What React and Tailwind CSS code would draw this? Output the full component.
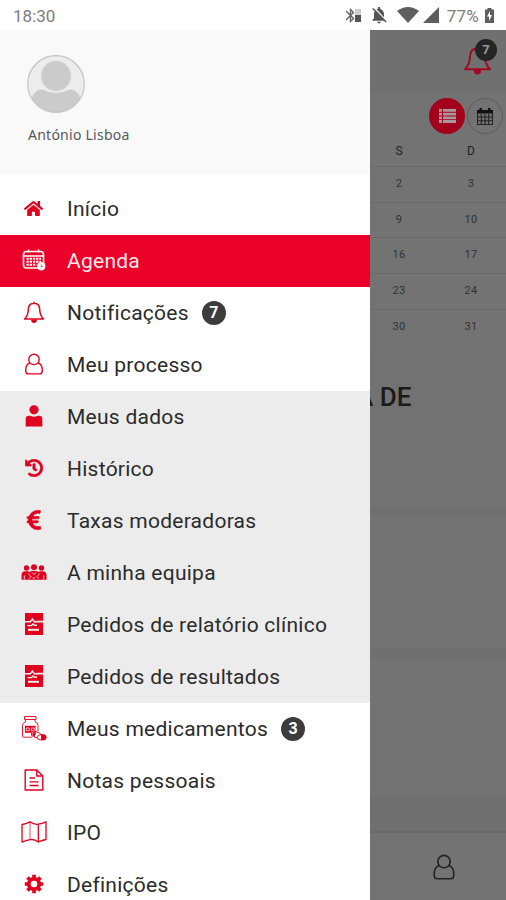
import { FaHome, FaHistory, FaEuroSign } from "react-icons/fa";
import { MdBluetooth, MdNotificationsOff } from "react-icons/md";


const CalendarClockIcon = () => (
    <svg className="h-[22px] w-6" viewBox="0 0 24 22" fill="none" stroke="currentColor">
        <rect x="1.5" y="2.5" width="20" height="16.5" rx="3" strokeWidth="1.6" />
        <path d="M1.5 7h20" strokeWidth="1.5" />
        <path d="M6.5 .5v3M16.5 .5v3" strokeWidth="1.5" />
        <path d="M4.5 9.8h14.5M4.5 12.8h14.5M4.5 15.8h10" strokeWidth="2" strokeDasharray="2.3 .9" />
        <circle cx="19.3" cy="17.3" r="4.2" fill="currentColor" stroke="none" />
        <path d="M19.3 15.3v2.2h1.6" stroke="#eb0029" strokeWidth=".7" />
    </svg>
)

const BellIcon = ({ className }) => (
    <svg className={className} viewBox="0 0 22 22" fill="none" stroke="currentColor" strokeWidth="1.5" strokeLinejoin="round">
        <path d="M11 2.2c-3.8 0-5.4 2.5-5.6 5.6C5.2 12.5 4 15.8 1.5 18h19c-2.5-2.2-3.7-5.5-3.9-10.2C16.4 4.7 14.8 2.2 11 2.2z" />
        <path d="M11 .7v1.5" />
        <path d="M8.3 18.5a2.7 2.7 0 0 0 5.4 0z" fill="currentColor" stroke="none" />
        <path d="M9 19.2a2 2 0 0 0 4 0" />
    </svg>
)

const UserOutlineIcon = ({ className }) => (
    <svg className={className} viewBox="0 0 20 24" fill="none" stroke="currentColor" strokeWidth="1.5">
        <circle cx="10" cy="7" r="5.7" />
        <path d="M5.5 10.7C2.5 11.8 1 14.3 1 18v1.5Q1 22.8 4 22.8h12q3 0 3-3.3V18c0-3.7-1.5-6.2-4.5-7.3" />
    </svg>
)

const UserIcon = () => (
    <svg className="h-[22px] w-[18px]" viewBox="0 0 18 22" fill="currentColor">
        <circle cx="9" cy="4.8" r="4.6" />
        <path d="M.7 21.5V14q0-3.3 3.3-3.3h1.2q3.8 2 7.6 0H14q3.3 0 3.3 3.3v7.5z" />
    </svg>
)

const TeamIcon = () => (
    <svg className="h-4 w-[26px]" viewBox="0 0 26 16" fill="currentColor">
        <circle cx="5.5" cy="4" r="2.7" />
        <circle cx="20.5" cy="4" r="2.7" />
        <circle cx="13" cy="3.2" r="3" />
        <path d="M.5 15.8V11q0-3.8 3.8-3.8h2.4q1.2 0 2 .7Q10 7 11 7h4q1.3 0 2.3.9.8-.7 2-.7h2.4q3.8 0 3.8 3.8v4.8z" />
        <path d="M3.3 11.5v4M22.7 11.5v4" stroke="#ececec" strokeWidth=".9" />
        <path d="M7.5 9.5l2 3M18.5 9.5l-2 3M11 8.5l2 2 2-2M8 14.5l2.5-2M18 14.5l-2.5-2M11.5 14h3" stroke="#ececec" strokeWidth=".8" fill="none" />
    </svg>
)

const ReportIcon = () => (
    <svg className="h-[22px] w-[18px]" viewBox="0 0 18 22">
        <path d="M0 0h18v22H0z" fill="currentColor" />
        <path d="M0 8.7h5.5L7.3 6l2.5 3.2L12 8.6h6" fill="none" stroke="#ececec" strokeWidth="1.6" />
        <path d="M2.5 12.6h4l1.5-1.6 1.5 1.2H12" fill="none" stroke="#ececec" strokeWidth="1.4" />
        <path d="M3 16.8h11" stroke="#ececec" strokeWidth="2" />
    </svg>
)

const MedicineIcon = () => (
    <svg className="h-[26px] w-[26px]" viewBox="0 0 26 26" fill="none" stroke="currentColor">
        <path d="M3.5 1.5h11.5v3H3.5z" strokeWidth=".9" />
        <path d="M4.5 4.5v2.2Q1.5 8 1.5 10.5v10.7q0 1 1 1H11M14 4.5v2.2q3 1.3 3 3.8V16" strokeWidth=".9" />
        <path d="M4 10.8h10.5v7H4z" fill="currentColor" stroke="none" />
        <path d="M5.3 13h3v2.7h-3zM10.3 13h3v2.7h-3z" stroke="#fff" strokeWidth=".7" />
        <rect x="10.5" y="16.8" width="9.5" height="5.5" rx="2.7" fill="#fff" strokeWidth=".9" transform="rotate(18 15 19)" />
        <path d="M11.5 18q1.5-1.5 3.5-.5l-1.3 4.3q-3-1-2.2-3.8z" fill="currentColor" stroke="none" />
        <rect x="16.5" y="19.8" width="8.5" height="5" rx="2.5" fill="#fff" strokeWidth=".9" />
        <path d="M20.5 19.8h2a2.5 2.5 0 0 1 0 5h-2z" fill="currentColor" />
    </svg>
)

const NoteIcon = () => (
    <svg className="h-[22px] w-5" viewBox="0 0 20 22" fill="none" stroke="currentColor" strokeWidth="1.4">
        <path d="M1.2 1h11.6l6 6v14H1.2z" />
        <path d="M12.8 1v6h6" />
        <path d="M5.5 9h5.5M5.5 12.8h9M5.5 16.5h9" strokeWidth="1.3" />
    </svg>
)

const MapIcon = () => (
    <svg className="h-[22px] w-[26px]" viewBox="0 0 26 22" fill="none" stroke="currentColor" strokeWidth="1.3" strokeLinejoin="round">
        <path d="M1 3.5Q5 2.8 9 .8q4 3.2 8.3 2.4Q21 2.5 25 .8v17.7q-4 .7-7.7 2.5-4.3-3.2-8.3-2.3-4 .8-8 2.5z" />
        <path d="M9 .8v17.9" strokeWidth=".7" />
        <path d="M17.3 3.2V21" />
    </svg>
)

const GearIcon = () => (
    <svg className="h-5 w-5" viewBox="0 0 20 20" fill="none" stroke="currentColor">
        <circle cx="10" cy="10" r="5.2" strokeWidth="3.8" />
        <path d="M10 .8v3M10 16.2v3M.8 10h3M16.2 10h3M3.5 3.5l2.2 2.2M14.3 14.3l2.2 2.2M3.5 16.5l2.2-2.2M14.3 5.7l2.2-2.2" strokeWidth="3.6" />
    </svg>
)

const CountBadge = ({ count }) => (
    <span className="mb-0.5 ml-[13px] flex h-6 w-6 items-center justify-center rounded-full bg-[#3c3c3c] text-[16px] font-bold tracking-normal text-white">
        {count}
    </span>
)

const MenuItem = ({ icon, label, count, active }) => (
    <li className={`flex h-[52px] shrink-0 items-center whitespace-nowrap pt-px text-[21px] tracking-[0.26px] ${active ? 'bg-[#eb0029] text-[#ffe9ec]' : 'text-[#2b2b2b]'}`}>
        <span className={`flex w-[67px] justify-center pb-[3px] ${active ? 'text-white' : 'text-[#e2001f]'}`}>{icon}</span>
        {label}
        {count && <CountBadge count={count} />}
    </li>
)

const StatusBar = () => (
    <div className="flex h-[30px] shrink-0 items-center justify-between bg-white pr-3 pl-[13px] text-[#7c7c7c]">
        <span className="pt-[3px] text-[17px]">18:30</span>

        <div className="flex items-center">
            <MdBluetooth className="h-[17px] w-[17px] text-[#666]" />
            <svg className="-ml-1 h-[13px] w-[6px]" viewBox="0 0 6 13">
                <path d="M0 0h6v6H0z" fill="#ccc" />
                <path d="M0 6h6v7H0z" fill="#555" />
            </svg>
            <MdNotificationsOff className="ml-2 h-5 w-5 text-[#555]" />
            <svg className="ml-2 h-4 w-[22px]" viewBox="0 0 22 16">
                <path d="M0 4Q11-4 22 4L11 16z" fill="#5e5e5e" />
            </svg>
            <svg className="ml-1 h-4 w-4" viewBox="0 0 16 16">
                <path d="M16 0v16H0z" fill="#5e5e5e" />
            </svg>
            <span className="ml-2 pt-[3px] text-[17px] tracking-[0.2px]">77%</span>
            <svg className="ml-1.5 h-[15px] w-[9px]" viewBox="0 0 9 15">
                <path d="M2.5 0h4v1.5H9V15H0V1.5h2.5z" fill="#5e5e5e" />
                <path d="M5 3L2 8.5h2V13l3-6H5z" fill="#fff" />
            </svg>
        </div>
    </div>
)

const Drawer = () => (
    <aside className="flex w-[370px] shrink-0 flex-col bg-white">

        <div className="flex h-[144px] shrink-0 flex-col bg-[#f9f9f9] pt-[25px] pl-[27px]">
            <svg className="h-[58px] w-[58px]" viewBox="0 0 58 58">
                <circle cx="29" cy="29" r="28.5" fill="#ececec" />
                <circle cx="29" cy="21" r="15" fill="#cbcbcb" />
                <path d="M4.5 43q4-9 11-8.5 13.5 7 27 0 7-.5 11 8.5A28 28 0 0 1 4.5 43z" fill="#cbcbcb" />
                <circle cx="29" cy="29" r="28.3" fill="none" stroke="#c4c4c4" strokeWidth="1.2" />
            </svg>
            <p className="mt-3 ml-px font-['Noto_Sans'] text-[14px] leading-5 tracking-[0.25px] text-[#55595f]">António Lisboa</p>
        </div>

        <ul className="flex flex-col pt-[9px]">
            <MenuItem icon={<FaHome className="h-[19px] w-[19px]" />} label="Início" />
            <MenuItem icon={<CalendarClockIcon />} label="Agenda" active />
            <MenuItem icon={<BellIcon className="h-[22px] w-[22px]" />} label="Notificações" count={7} />
            <MenuItem icon={<UserOutlineIcon className="h-[22px] w-[20px]" />} label="Meu processo" />
        </ul>

        <ul className="flex flex-col bg-[#ececec]">
            <MenuItem icon={<UserIcon />} label="Meus dados" />
            <MenuItem icon={<FaHistory className="h-[18px] w-[18px]" stroke="currentColor" strokeWidth="18" />} label="Histórico" />
            <MenuItem icon={<FaEuroSign className="h-[22px] w-[18px]" stroke="currentColor" strokeWidth="14" />} label="Taxas moderadoras" />
            <MenuItem icon={<TeamIcon />} label="A minha equipa" />
            <MenuItem icon={<ReportIcon />} label="Pedidos de relatório clínico" />
            <MenuItem icon={<ReportIcon />} label="Pedidos de resultados" />
        </ul>

        <ul className="flex flex-col">
            <MenuItem icon={<MedicineIcon />} label="Meus medicamentos" count={3} />
            <MenuItem icon={<NoteIcon />} label="Notas pessoais" />
            <MenuItem icon={<MapIcon />} label="IPO" />
            <MenuItem icon={<GearIcon />} label="Definições" />
        </ul>

    </aside>
)

const weekend = [["2", "3"], ["9", "10"], ["16", "17"], ["23", "24"], ["30", "31"]]

const AgendaPage = () => (
    <main className="flex min-w-0 flex-1 flex-col overflow-hidden bg-[#737373]">

        <div className="flex h-[62px] shrink-0 justify-end bg-[#707070] pt-[14px] pr-[11px]">
            <div className="relative h-8 w-8">
                <BellIcon className="h-8 w-[29px] text-[#a00a20]" />
                <span className="absolute -top-[5px] left-[12px] flex h-[22px] w-[22px] items-center justify-center rounded-full bg-[#252525] text-[13px] font-bold text-[#999]">7</span>
            </div>
        </div>

        <div className="flex h-[47px] shrink-0 justify-end gap-[2px] pt-1.5 pr-[3px]">
            <span className="flex h-9 w-9 items-center justify-center rounded-full bg-[#a3001c]">
                <svg className="h-[14px] w-[17px]" viewBox="0 0 17 14" fill="#a89a9c">
                    <path d="M0 0h3v2.8H0zM4 0h13v2.8H4zM0 3.7h3v2.8H0zM4 3.7h13v2.8H4zM0 7.4h3v2.8H0zM4 7.4h13v2.8H4zM0 11.1h3v2.8H0zM4 11.1h13v2.8H4z" />
                </svg>
            </span>
            <span className="flex h-9 w-9 items-center justify-center rounded-full border border-[#5c5c5c]">
                <svg className="h-[17px] w-4" viewBox="0 0 16 17">
                    <path d="M0 2h2.5V0H5v2h6V0h2.5v2H16v3.5H0z" fill="#111" />
                    <path d="M.5 5v11.5h15V5M.5 9h15M.5 12.7h15M4.3 6v10.5M8 6v10.5M11.7 6v10.5" fill="none" stroke="#222" strokeWidth="1.1" />
                </svg>
            </span>
        </div>

        <div className="-ml-[7px] flex w-[144px] shrink-0 flex-col text-center text-[11px] text-[#323232]">
            <div className="grid h-[27px] grid-cols-2 pt-[3px] text-[12px] text-[#222]">
                <span>S</span>
                <span>D</span>
            </div>
            {weekend.map(([sat, sun]) => (
                <div key={sat} className="grid h-[35.7px] grid-cols-2 items-center border-t border-[#6b6b6b] tracking-[0.4px]">
                    <span>{sat}</span>
                    <span>{sun}</span>
                </div>
            ))}
        </div>

        <div className="mt-[11px] h-[152px] shrink-0 bg-[#727272] pt-6">
            <h2 className="-ml-[14px] text-[26px] leading-9 font-medium whitespace-nowrap text-[#1b1b1b]">A DE</h2>
        </div>

        <div className="h-2 shrink-0 bg-[#6f6f6f]" />
        <div className="h-[132px] shrink-0" />
        <div className="h-3 shrink-0 bg-[#707070]" />
        <div className="h-[137px] shrink-0" />
        <div className="h-[35px] shrink-0 bg-[#6f6f6f]" />

        <nav className="flex flex-1 justify-center border-t-2 border-[#696969] pt-[21px] pl-[11px]">
            <UserOutlineIcon className="h-[26px] w-[22px] text-[#222]" />
        </nav>

    </main>
)

const App = () => {

    return (

        <div className="flex h-[900px] w-[506px] flex-col overflow-hidden bg-white font-[Roboto,sans-serif]">

            <StatusBar />

            <div className="flex min-h-0 flex-1 overflow-hidden">
                <Drawer />
                <AgendaPage />
            </div>

        </div>
    );
}

export default App
